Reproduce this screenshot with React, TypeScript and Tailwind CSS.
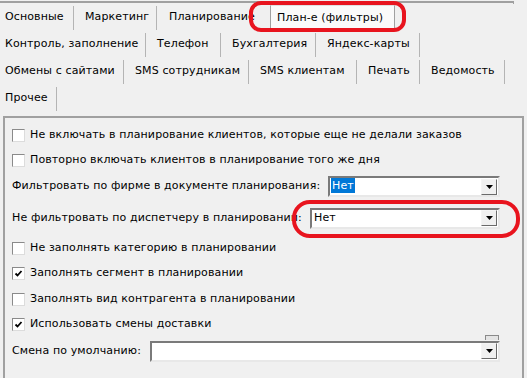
import { ReactNode } from 'react';

const font = { fontFamily: '"DejaVu Sans", Verdana, sans-serif' };

type Tab = { label: string; w: number; first?: boolean };

const rows: Tab[][] = [
  [
    { label: 'Основные', w: 74, first: true },
    { label: 'Маркетинг', w: 83 },
  ],
  [
    { label: 'Контроль, заполнение', w: 146, first: true },
    { label: 'Телефон', w: 75 },
    { label: 'Бухгалтерия', w: 95 },
    { label: 'Яндекс-карты', w: 104 },
  ],
  [
    { label: 'Обмены с сайтами', w: 124, first: true },
    { label: 'SMS сотрудникам', w: 125 },
    { label: 'SMS клиентам', w: 108 },
    { label: 'Печать', w: 63 },
    { label: 'Ведомость', w: 85 },
  ],
  [{ label: 'Прочее', w: 57, first: true }],
];

function TabItem({ tab }: { tab: Tab }) {
  return (
    <div
      className={`flex h-[24px] shrink-0 items-center border-r border-[#b4b4b4] whitespace-nowrap ${tab.first ? 'pl-[5px]' : 'pl-[11px]'}`}
      style={{ width: tab.w }}
    >
      {tab.label}
    </div>
  );
}

function CheckBox({ checked }: { checked?: boolean }) {
  return (
    <div className="mr-[5px] flex h-[13px] w-[13px] shrink-0 items-center justify-center border border-t-[#8a8a8a] border-l-[#8a8a8a] border-r-[#dcdcdc] border-b-[#dcdcdc] bg-white">
      {checked && (
        <svg width="9" height="9" viewBox="0 0 9 9">
          <path d="M1.5 4.5 L3.5 6.5 L7.5 2" stroke="#000" strokeWidth="1.8" fill="none" />
        </svg>
      )}
    </div>
  );
}

function Select({ w, value, selected }: { w: number; value?: string; selected?: boolean }) {
  return (
    <div
      className="flex h-[21px] shrink-0 items-center border-2 border-t-[#7a7a7a] border-l-[#7a7a7a] border-r-[#e8e8e8] border-b-[#e8e8e8] bg-white pl-[1px] pr-[1px]"
      style={{ width: w }}
    >
      <div className="flex-1">
        {value && (
          <span className={`px-[1px] py-[1px] ${selected ? 'bg-[#0078d7] text-white' : ''}`}>{value}</span>
        )}
      </div>
      <div className="flex h-[16px] w-[16px] items-center justify-center border border-t-[#f4f4f4] border-l-[#f4f4f4] border-r-[#6a6a6a] border-b-[#6a6a6a] bg-[#f0f0f0]">
        <svg width="7" height="4" viewBox="0 0 7 4">
          <path d="M0 0 H7 L3.5 4 Z" fill="#000" />
        </svg>
      </div>
    </div>
  );
}

function Row({ h, children }: { h: number; children: ReactNode }) {
  return (
    <div className="flex items-center whitespace-nowrap pl-[7px]" style={{ height: h }}>
      {children}
    </div>
  );
}

export default function App() {
  return (
    <div className="relative h-[378px] w-[527px] overflow-hidden bg-[#f0f0f0] text-[11px] tracking-[0.12px] text-black" style={font}>
      {/* рамка сверху */}
      <div className="mt-[1px] h-[3px] w-[514px] border-t-2 border-r border-[#a0a0a0]" />

      {/* вкладки */}
      <div className="flex h-[27px] items-center">
        {rows[0].map((t) => (
          <TabItem key={t.label} tab={t} />
        ))}
        <div className="flex h-[24px] w-[113px] items-center overflow-hidden whitespace-nowrap pl-[12px]">Планирование</div>
        <div className="flex h-[26px] w-[125px] items-center border-l border-r border-t border-l-[#a0a0a0] border-r-[#a0a0a0] border-t-[#e0e0e0] bg-[#fafafa] pl-[6px] whitespace-nowrap">
          План-е (фильтры)
        </div>
      </div>
      {rows.slice(1).map((r, i) => (
        <div key={i} className="flex h-[27px] items-center">
          {r.map((t) => (
            <TabItem key={t.label} tab={t} />
          ))}
        </div>
      ))}

      {/* панель */}
      <div className="ml-[3px] mt-[4px] w-[521px] border-2 border-[#a0a0a0] border-b-0 pt-[5px] pb-[20px]">
        <Row h={25}>
          <CheckBox />
          Не включать в планирование клиентов, которые еще не делали заказов
        </Row>
        <Row h={25}>
          <CheckBox />
          Повторно включать клиентов в планирование того же дня
        </Row>
        <Row h={27}>
          <div className="w-[316px] shrink-0">Фильтровать по фирме в документе планирования:</div>
          <Select w={172} value="Нет" selected />
        </Row>
        <Row h={36}>
          <div className="w-[298px] shrink-0 overflow-hidden">Не фильтровать по диспетчеру в планировании:</div>
          <Select w={190} value="Нет" />
        </Row>
        <Row h={25}>
          <CheckBox />
          Не заполнять категорию в планировании
        </Row>
        <Row h={25}>
          <CheckBox checked />
          Заполнять сегмент в планировании
        </Row>
        <Row h={26}>
          <CheckBox />
          Заполнять вид контрагента в планировании
        </Row>
        <Row h={25}>
          <CheckBox checked />
          Использовать смены доставки
        </Row>
        <Row h={28}>
          <div className="w-[138px] shrink-0">Смена по умолчанию:</div>
          <div className="relative">
            <div className="absolute -top-[6px] right-[1px] h-[5px] w-[14px] border border-b-0 border-[#8a8a8a] bg-[#e4e4e4]" />
            <Select w={350} />
          </div>
        </Row>
      </div>

      {/* красные выделения */}
      <div className="absolute left-[249px] top-[1px] h-[31px] w-[157px] rounded-[12px] border-[4px] border-[#e8141e]" />
      <div className="absolute left-[292px] top-[200px] h-[38px] w-[228px] rounded-[18px] border-[4px] border-[#e8141e]" />
    </div>
  );
}
